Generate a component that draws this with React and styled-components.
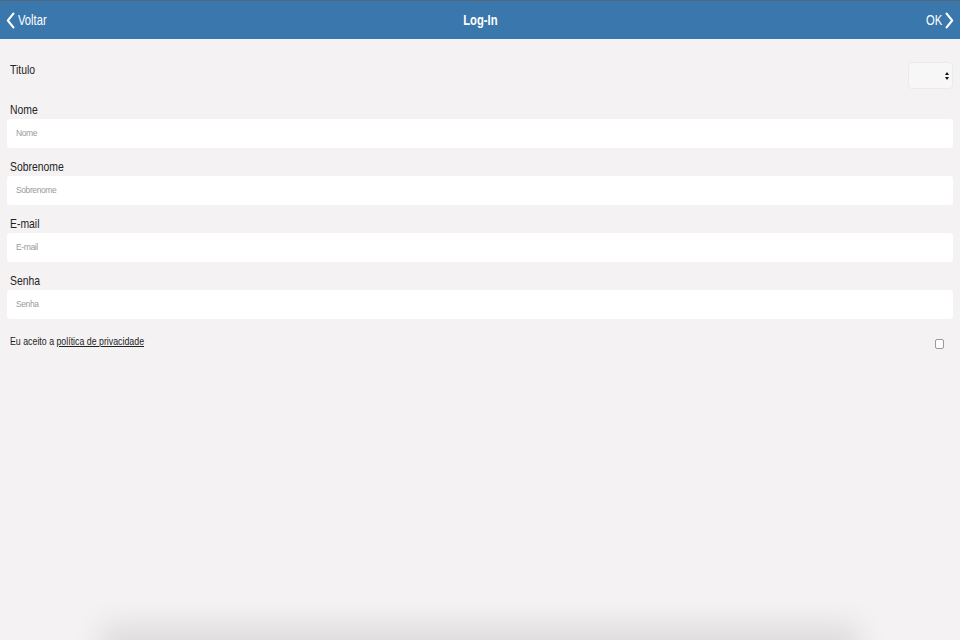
import React from 'react';
import styled, { createGlobalStyle } from 'styled-components';

const FONT = '"Liberation Sans", Arial, sans-serif';

const Global = createGlobalStyle`
  html, body {
    margin: 0;
    padding: 0;
    background: #f4f2f2;
    font-family: ${FONT};
  }
  * { box-sizing: border-box; }
`

const Page = styled.div`
  position: relative;
  width: 960px;
  height: 640px;
  overflow: hidden;
  background: #f4f2f2;
`

// the screenshot font is a condensed sans; squeeze the Arial-width one
const Narrow = styled.span`
  display: inline-block;
  white-space: nowrap;
  transform: scaleX(0.8);
  transform-origin: ${props => props.origin || 'left'} center;
`

const Header = styled.header`
  display: grid;
  grid-template-columns: 1fr auto 1fr;
  align-items: center;
  height: 39px;
  background: #3a77ad;
  border-top: 1px solid #55677a;
  color: #fff;
  padding: 0 6px;
`

const NavButton = styled.a`
  display: flex;
  align-items: center;
  gap: 3px;
  justify-self: ${props => props.align};
  color: #fff;
  font-size: 14px;
  text-decoration: none;
`

const Title = styled.div`
  font-size: 14px;
  font-weight: bold;
`

const Form = styled.form`
  display: flex;
  flex-direction: column;
  padding: 23px 7px 0;
`

const SelectRow = styled.div`
  display: flex;
  justify-content: space-between;
  align-items: flex-start;
  margin-bottom: 13px;
`

const Label = styled.label`
  display: block;
  padding-left: 3px;
  font-size: 13px;
  line-height: 16px;
  color: #1f2326;
`

const Select = styled.div`
  position: relative;
  width: 45px;
  height: 27px;
  background: #f8f7f7;
  border: 1px solid #ecebeb;
  border-radius: 4px;
`

const Arrows = styled.svg`
  position: absolute;
  right: 3px;
  top: 9px;
`

const Field = styled.div`
  display: flex;
  flex-direction: column;
  gap: 1px;
  margin-bottom: 11.5px;
`

const Input = styled.input`
  height: 28.5px;
  width: 100%;
  border: none;
  border-radius: 3px;
  background: #fff;
  padding: 0 9px;
  font-family: ${FONT};
  font-size: 8.5px;
  letter-spacing: -0.4px;
  outline: none;

  &::placeholder {
    color: #9a9a9a;
  }
`

const CheckRow = styled.div`
  display: flex;
  justify-content: space-between;
  align-items: center;
  padding: 2px 3px 0;
  font-size: 11px;
  color: #1f2326;
`

const Link = styled.a`
  color: #1f2326;
  text-decoration: underline;
`

const Check = styled.span`
  width: 9px;
  height: 10px;
  margin-right: 6px;
  margin-top: 7px;
  border: 1px solid #9a9a9a;
  border-radius: 2px;
  background: #fff;
`

const BottomShadow = styled.div`
  position: absolute;
  left: 110px;
  right: 110px;
  bottom: -40px;
  height: 40px;
  box-shadow: 0 -6px 30px 10px rgba(0, 0, 0, 0.09);
`

const Chevron = ({ dir }) => (
  <svg width="9" height="17" viewBox="0 0 9 17">
    <path
      d={dir === 'left' ? 'M7.5 1.5 L1.8 8.5 L7.5 15.5' : 'M1.5 1.5 L7.2 8.5 L1.5 15.5'}
      fill="none"
      stroke="#fff"
      strokeWidth="2"
      strokeLinecap="round"
      strokeLinejoin="round"
    />
  </svg>
);

const fields = ['Nome', 'Sobrenome', 'E-mail', 'Senha'];

const App = () => (
  <Page>
    <Global />
    <Header>
      <NavButton href="#" align="start">
        <Chevron dir="left" />
        <Narrow>Voltar</Narrow>
      </NavButton>
      <Title><Narrow origin="center">Log-In</Narrow></Title>
      <NavButton href="#" align="end">
        <Narrow origin="right">OK</Narrow>
        <Chevron dir="right" />
      </NavButton>
    </Header>
    <Form>
      <SelectRow>
        <Label><Narrow>Titulo</Narrow></Label>
        <Select>
          <Arrows width="4" height="8" viewBox="0 0 4 8">
            <path d="M2 0 L4 3 L0 3 Z M2 8 L4 5 L0 5 Z" fill="#111" />
          </Arrows>
        </Select>
      </SelectRow>
      {fields.map(name => (
        <Field key={name}>
          <Label><Narrow>{name}</Narrow></Label>
          <Input placeholder={name} />
        </Field>
      ))}
      <CheckRow>
        <Narrow>Eu aceito a <Link href="#">política de privacidade</Link></Narrow>
        <Check />
      </CheckRow>
    </Form>
    <BottomShadow />
  </Page>
);

export default App;
